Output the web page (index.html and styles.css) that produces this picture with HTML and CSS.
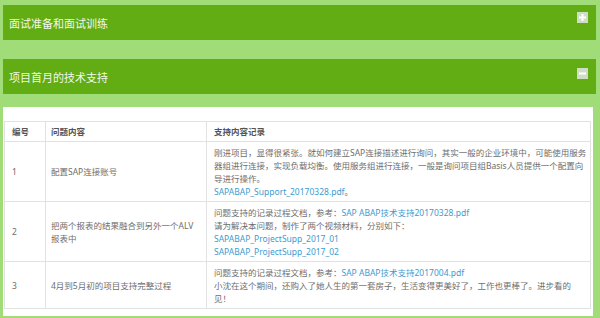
FILE: index.html
```html
<!DOCTYPE html>
<html lang="zh-CN">
<head>
<meta charset="utf-8">
<title>项目支持</title>
<link rel="stylesheet" href="styles.css">
</head>
<body>
<div class="page">
  <div class="bar">
    <span class="bar-title">面试准备和面试训练</span>
    <svg class="toggle" width="11" height="11" viewBox="0 0 11 11"><rect width="11" height="11" fill="#cfdcc6"/><rect x="2" y="4.5" width="7" height="2" fill="#fff"/><rect x="4.5" y="2" width="2" height="7" fill="#fff"/></svg>
  </div>
  <div class="bar bar-open">
    <span class="bar-title">项目首月的技术支持</span>
    <svg class="toggle" width="11" height="11" viewBox="0 0 11 11"><rect width="11" height="11" fill="#cfdcc6"/><rect x="2" y="4.5" width="7" height="2" fill="#fff"/></svg>
  </div>
  <div class="panel">
    <table class="support">
      <colgroup><col class="c-no"><col class="c-q"><col></colgroup>
      <thead>
        <tr><th>编号</th><th class="q">问题内容</th><th class="rec">支持内容记录</th></tr>
      </thead>
      <tbody>
        <tr>
          <td>1</td>
          <td class="q">配置SAP连接账号</td>
          <td class="rec">刚进项目，显得很紧张。就如何建立SAP连接描述进行询问，其实一般的企业环境中，可能使用服务器组进行连接，实现负载均衡。使用服务组进行连接，一般是询问项目组Basis人员提供一个配置向导进行操作。<br><a href="#">SAPABAP_Support_20170328.pdf</a>。</td>
        </tr>
        <tr>
          <td>2</td>
          <td class="q">把两个报表的结果融合到另外一个ALV报表中</td>
          <td class="rec">问题支持的记录过程文档，参考：<a href="#">SAP ABAP技术支持20170328.pdf</a><br>请为解决本问题，制作了两个视频材料，分别如下：<br><a href="#">SAPABAP_ProjectSupp_2017_01</a><br><a href="#">SAPABAP_ProjectSupp_2017_02</a></td>
        </tr>
        <tr>
          <td>3</td>
          <td class="q">4月到5月初的项目支持完整过程</td>
          <td class="rec">问题支持的记录过程文档，参考：<a href="#">SAP ABAP技术支持2017004.pdf</a><br>小沈在这个期间，还购入了她人生的第一套房子，生活变得更美好了，工作也更棒了。进步看的见！</td>
        </tr>
      </tbody>
    </table>
  </div>
</div>
</body>
</html>
```

FILE: styles.css
```css
html, body {
  margin: 0;
  padding: 0;
}
body {
  background: #a0dc78;
  font-family: "Noto Sans CJK SC", "Noto Sans", "Liberation Sans", sans-serif;
}
.page {
  display: flex;
  flex-direction: column;
  padding: 5px 4px 0 3px;
}
.bar {
  height: 35px;
  background: #62ac14;
  display: flex;
  align-items: center;
  justify-content: space-between;
  padding: 0 8px 0 6px;
  color: #f2f7ea;
  font-size: 11px;
}
.bar-title {
  line-height: 14px;
}
.toggle {
  align-self: flex-start;
  margin-top: 7px;
}
.bar-open {
  margin-top: 19px;
}
.bar-open .toggle {
  margin-top: 9px;
}
.panel {
  margin-top: 13px;
  margin-right: 3px;
  background: #fff;
  padding: 14px 2px 7px 1px;
}
.support {
  width: 100%;
  border-collapse: collapse;
  table-layout: fixed;
  font-family: "Noto Sans", "Noto Sans CJK SC", sans-serif;
  font-size: 8.5px;
  line-height: 13px;
  color: #6e6e6e;
}
.c-no { width: 41px; }
.c-q { width: 161px; }
.support th,
.support td {
  border: 1px solid #e2e2e2;
  padding: 3.5px 4px 3.5px 7px;
  text-align: left;
  vertical-align: middle;
}
.support .q {
  padding-left: 5px;
  padding-right: 11px;
}
.support .rec {
  padding-right: 3.5px;
}
.support th {
  padding-top: 3px;
  padding-bottom: 3px;
  font-weight: bold;
  color: #555;
}
.support a {
  color: #3d9bd0;
  text-decoration: none;
}
```
